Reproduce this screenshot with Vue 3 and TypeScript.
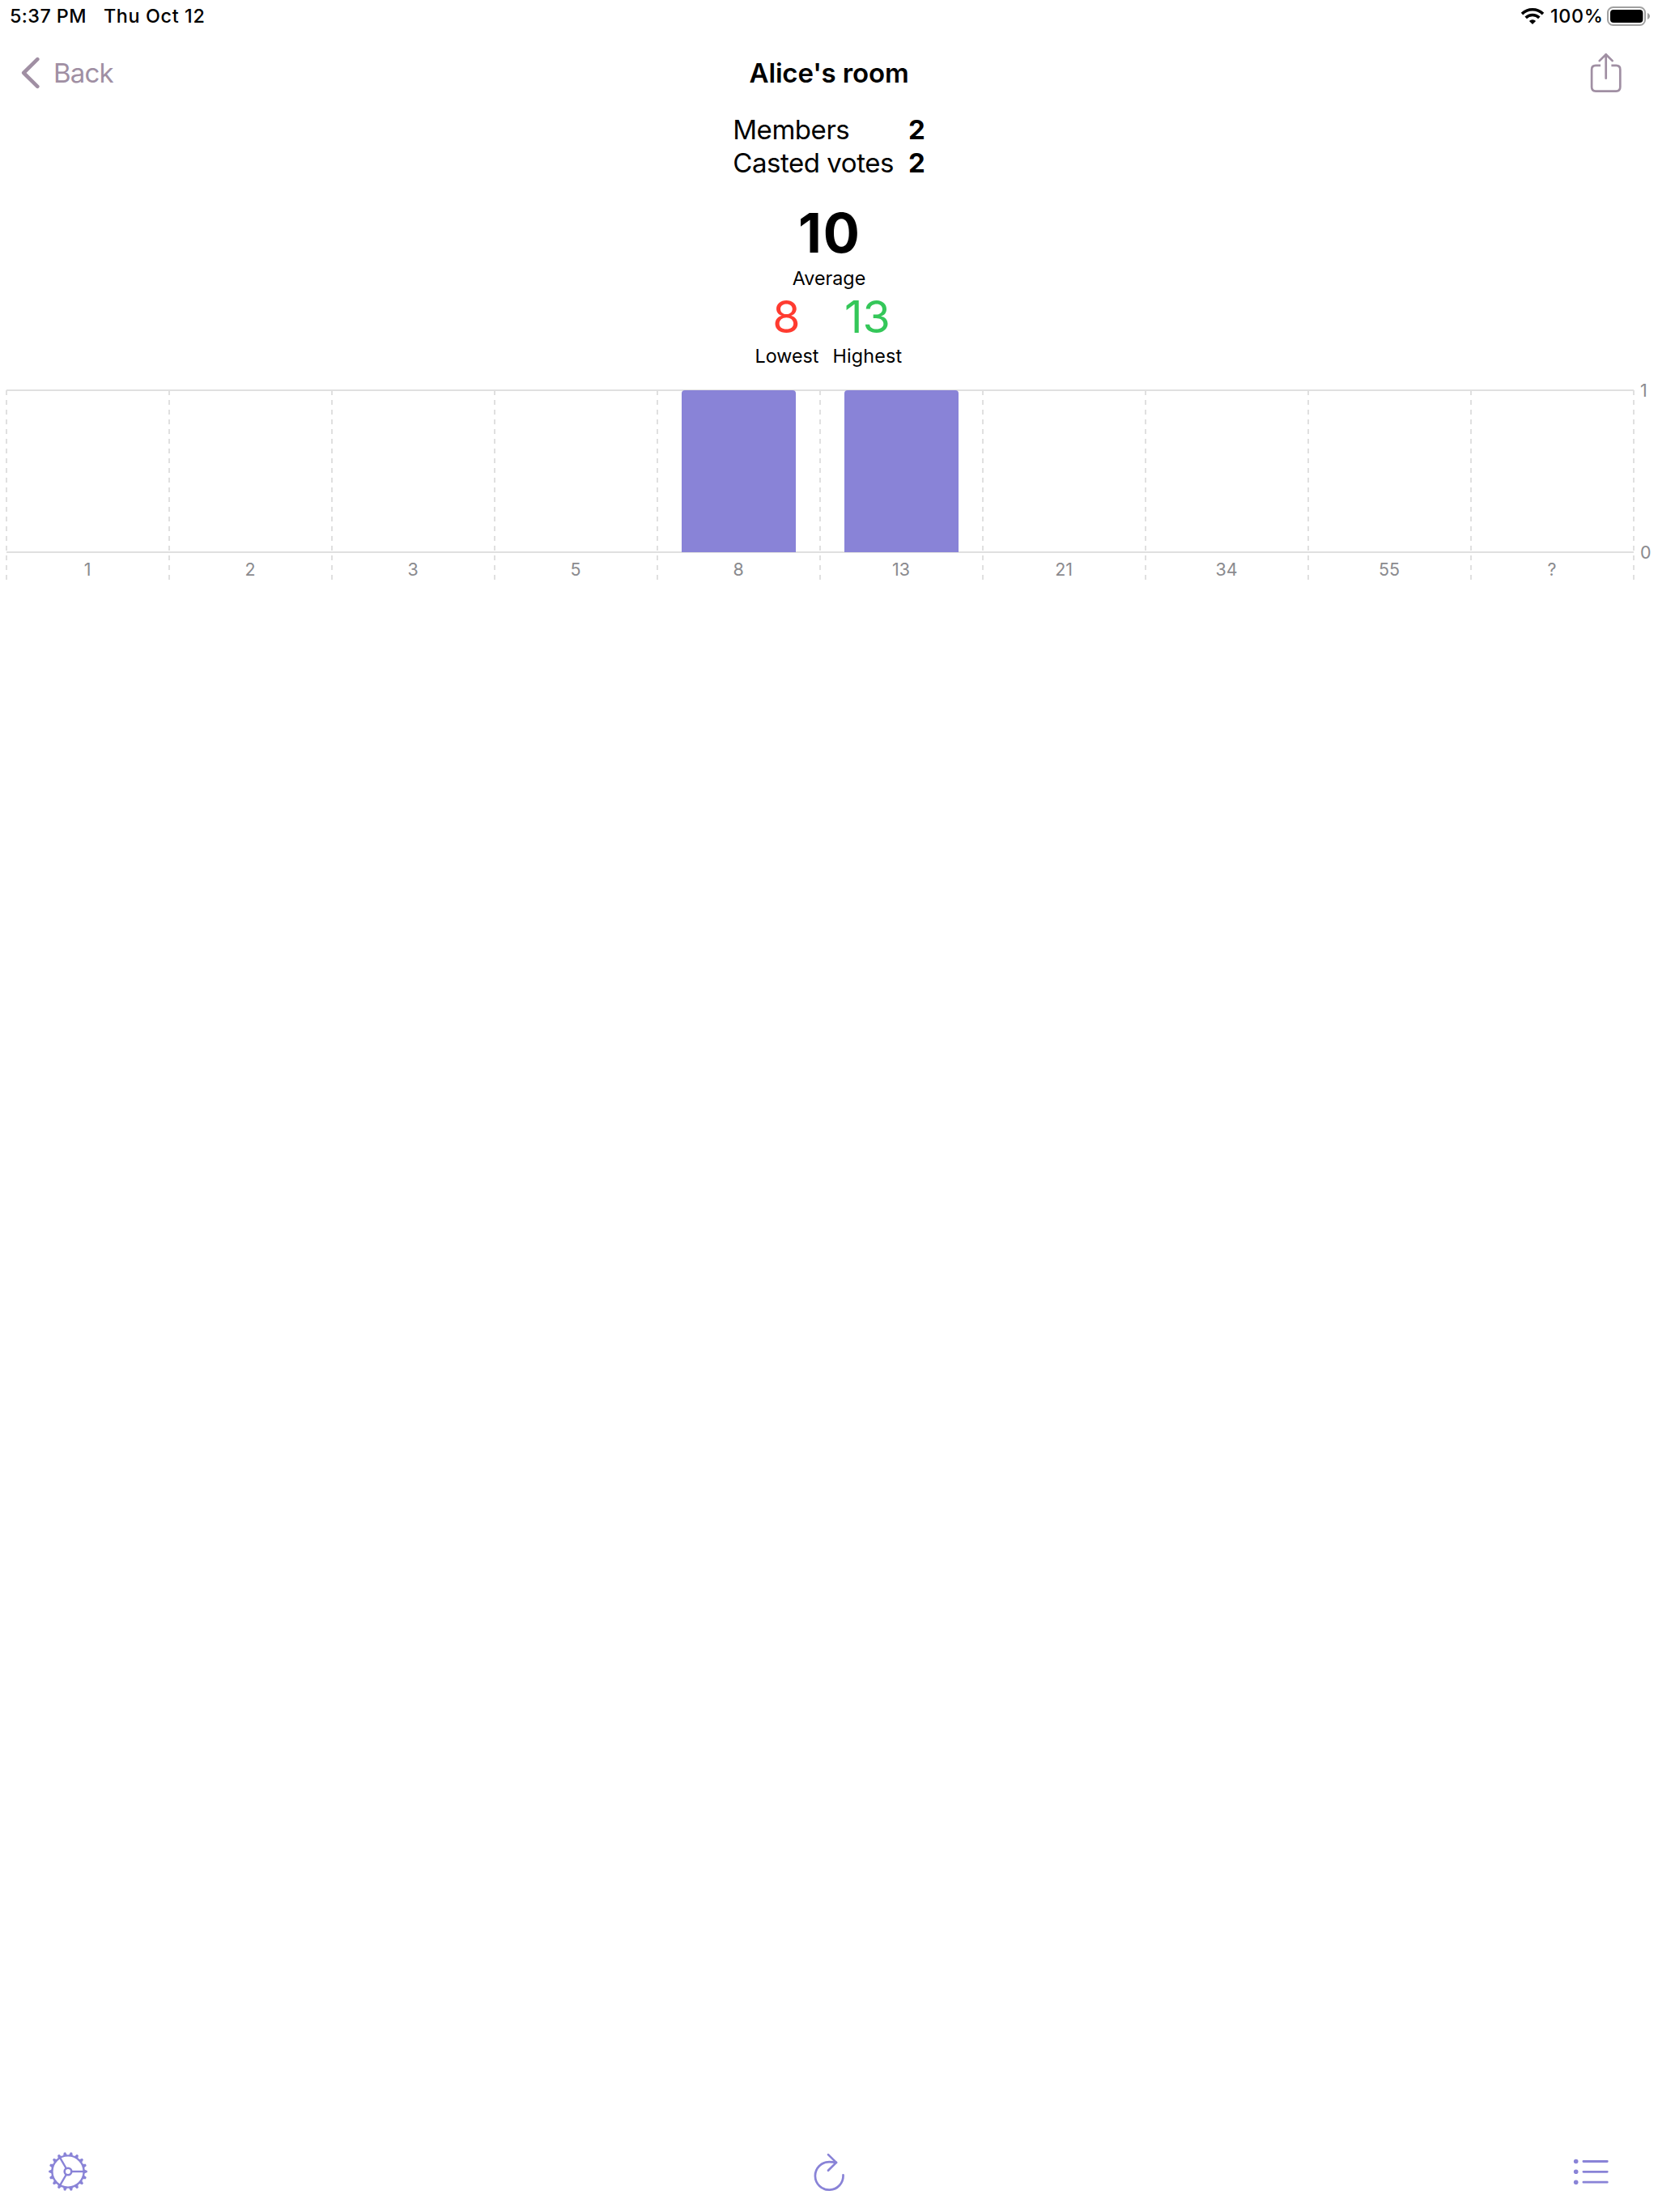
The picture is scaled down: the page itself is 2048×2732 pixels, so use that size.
<script setup lang="ts">
interface Vote {
  label: string
  count: number
}

const votes: Vote[] = [
  { label: '1', count: 0 },
  { label: '2', count: 0 },
  { label: '3', count: 0 },
  { label: '5', count: 0 },
  { label: '8', count: 1 },
  { label: '13', count: 1 },
  { label: '21', count: 0 },
  { label: '34', count: 0 },
  { label: '55', count: 0 },
  { label: '?', count: 0 },
]

const maxCount = 1
const teeth: number[] = Array.from({ length: 18 }, (_, i) => i * 20)
const spokes: number[] = [0, 120, 240]
</script>

<template>
  <div class="screen">
    <header class="status">
      <div class="status-left">
        <span class="time">5:37 PM</span>
        <span class="date">Thu Oct 12</span>
      </div>
      <div class="status-right">
        <svg class="wifi" width="30" height="22" viewBox="0 0 30 22">
          <g fill="none" stroke="#000" stroke-width="3.6">
            <path d="M2 8.1A18.6 18.6 0 0 1 28 8.1" />
            <path d="M6.7 12.9A11.9 11.9 0 0 1 23.3 12.9" />
          </g>
          <path d="M15 21L10.9 16.9A5.8 5.8 0 0 1 19.1 16.9Z" fill="#000" />
        </svg>
        <span class="percent">100%</span>
        <svg class="battery" width="54" height="24" viewBox="0 0 54 24">
          <rect x="1" y="1" width="46" height="22" rx="6.5" fill="none" stroke="#a0a0a0" stroke-width="2" />
          <rect x="4" y="4" width="40.4" height="16" rx="4" fill="#000" />
          <path d="M50 8C54 9.4 54 14.6 50 16Z" fill="#a0a0a0" />
        </svg>
      </div>
    </header>

    <nav class="nav">
      <div class="back">
        <svg width="24" height="40" viewBox="0 0 24 40">
          <path d="M21.3 3.2L4.2 20L21.3 36.8" fill="none" stroke="currentColor" stroke-width="4.6" stroke-linecap="round" stroke-linejoin="round" />
        </svg>
        <span class="back-label">Back</span>
      </div>
      <h1 class="title">Alice's room</h1>
      <svg class="share" width="40" height="50" viewBox="0 0 40 50" fill="none" stroke="currentColor" stroke-width="2.7" stroke-linecap="round" stroke-linejoin="round">
        <path d="M13 15.9H7.1Q2.1 15.9 2.1 20.9V42.6Q2.1 47.6 7.1 47.6H32.3Q37.3 47.6 37.3 42.6V20.9Q37.3 15.9 32.3 15.9H26.4" stroke-linecap="butt" />
        <path d="M19.7 31.7V2.2M11.7 10.1L19.7 2.2L27.7 10.1" />
      </svg>
    </nav>

    <section class="counts">
      <div class="count-labels">
        <span class="members">Members</span>
        <span class="casted">Casted votes</span>
      </div>
      <div class="count-values">
        <span>2</span>
        <span>2</span>
      </div>
    </section>

    <section class="summary">
      <div class="average">10</div>
      <div class="caption average-caption">Average</div>
      <div class="extremes">
        <div class="extreme">
          <div class="value low">8</div>
          <div class="caption lowest">Lowest</div>
        </div>
        <div class="extreme">
          <div class="value high">13</div>
          <div class="caption highest">Highest</div>
        </div>
      </div>
    </section>

    <section class="chart">
      <div class="columns">
        <div v-for="vote in votes" :key="vote.label" class="column">
          <div class="plot">
            <div v-if="vote.count" class="bar" :style="{ height: (vote.count / maxCount) * 100 + '%' }"></div>
          </div>
          <div class="tick">{{ vote.label }}</div>
        </div>
      </div>
      <div class="axis">
        <span>1</span>
        <span>0</span>
      </div>
    </section>

    <footer class="toolbar">
      <svg width="50" height="50" viewBox="-25 -25 50 50" fill="none" stroke="currentColor" stroke-width="2.4">
        <circle r="19.6" />
        <circle r="4.3" stroke-width="2.6" />
        <path v-for="a in spokes" :key="'s' + a" d="M4.6 0H19.6" :transform="`rotate(${a})`" />
        <path v-for="a in teeth" :key="'t' + a" d="M20 -2.5L23.8 -1.1V1.1L20 2.5Z" fill="currentColor" stroke="none" :transform="`rotate(${a})`" />
      </svg>
      <svg width="50" height="50" viewBox="0 0 50 50" fill="none" stroke="currentColor" stroke-width="2.7" stroke-linecap="round" stroke-linejoin="round">
        <path d="M41.5 29.4A17.3 17.3 0 1 1 24.2 13.1Q28.4 13.1 33 13.9" />
        <path d="M23 4.1L33 13.9L23 23.8" />
      </svg>
      <svg width="50" height="50" viewBox="0 0 50 50">
        <g fill="currentColor">
          <circle cx="6.7" cy="12.5" r="2.8" />
          <circle cx="6.7" cy="25.3" r="2.8" />
          <circle cx="6.7" cy="38.2" r="2.8" />
        </g>
        <path d="M15.9 12.5H45.3M15.9 25.3H45.3M15.9 38.2H45.3" fill="none" stroke="currentColor" stroke-width="2.8" stroke-linecap="round" />
      </svg>
    </footer>
  </div>
</template>

<style>
body {
  margin: 0;
  background: #fff;
}
</style>

<style scoped>
.screen {
  display: flex;
  flex-direction: column;
  width: 2048px;
  height: 2732px;
  overflow: hidden;
  background: #fff;
  color: #000;
  font-family: Inter, "Liberation Sans", sans-serif;
  white-space: nowrap;
}
.status {
  display: flex;
  justify-content: space-between;
  box-sizing: border-box;
  height: 40px;
  padding: 0 9px 0 12px;
  font-size: 23.3px;
  font-weight: 500;
  line-height: 40px;
}
.status-left,
.status-right {
  display: flex;
  align-items: center;
}
.time {
  width: 116px;
  letter-spacing: 0.45px;
}
.date {
  letter-spacing: 0.65px;
}
.percent {
  width: 70px;
  margin-left: 7px;
  letter-spacing: 0.7px;
}
.nav {
  display: grid;
  grid-template-columns: 1fr auto 1fr;
  align-items: center;
  height: 100px;
  padding: 0 44px 0 44px;
  font-size: 33px;
  color: #a08fa3;
}
.back {
  display: flex;
  align-items: center;
  margin-left: -19px;
}
.back-label {
  margin-left: 17px;
  letter-spacing: -0.8px;
}
.title {
  margin: 0;
  font-size: 33px;
  font-weight: 600;
  line-height: 40px;
  letter-spacing: -0.15px;
  color: #000;
}
.share {
  justify-self: end;
}
.counts {
  display: flex;
  justify-content: center;
  gap: 18px;
  height: 82px;
  font-size: 33px;
}
.count-labels,
.count-values {
  display: flex;
  flex-direction: column;
  line-height: 41px;
}
.count-labels {
  letter-spacing: -0.45px;
}
.count-values {
  font-weight: 700;
}
.summary {
  display: flex;
  flex-direction: column;
  align-items: center;
  margin-top: 26px;
}
.average {
  height: 80px;
  margin-right: -2px;
  font-size: 67px;
  font-weight: 700;
  line-height: 80px;
  letter-spacing: 2px;
}
.caption {
  font-size: 23.3px;
  line-height: 34px;
}
.average-caption {
  line-height: 31px;
}
.highest {
  letter-spacing: 0.2px;
}
.extremes {
  display: flex;
  gap: 17px;
  margin-right: 1px;
}
.extreme {
  display: flex;
  flex-direction: column;
  align-items: center;
}
.value {
  font-size: 55.5px;
  line-height: 64px;
}
.low {
  margin-right: 1px;
  color: #ff3b30;
}
.high {
  color: #34c759;
}
.chart {
  display: flex;
  margin-top: 25px;
  padding-left: 8px;
  font-size: 21.4px;
  color: #8a8a8e;
}
.columns {
  position: relative;
  display: flex;
  width: 2010px;
  height: 234px;
}
.column {
  position: relative;
  width: 201px;
}
.column::before,
.column:last-child::after {
  content: "";
  position: absolute;
  top: 0;
  left: -1px;
  width: 2px;
  height: 234px;
  background: repeating-linear-gradient(to bottom, #e0e0e0 0 6px, transparent 6px 12px);
}
.column:last-child::after {
  left: 200px;
}
.plot {
  display: flex;
  align-items: flex-end;
  justify-content: center;
  height: 200px;
  box-shadow: 0 -1px #e0e0e0, 0 1px #e0e0e0, inset 0 1px #e0e0e0, inset 0 -1px #e0e0e0;
}
.bar {
  width: 140.7px;
  border-radius: 4px 4px 0 0;
  background: #8983d7;
}
.tick {
  height: 42px;
  padding-right: 1px;
  line-height: 42px;
  text-align: center;
}
.axis {
  display: flex;
  flex-direction: column;
  justify-content: space-between;
  height: 240px;
  margin: -20px 0 0 8px;
  line-height: 40px;
}
.toolbar {
  display: flex;
  justify-content: space-between;
  margin-top: auto;
  padding: 0 58px 25px 59px;
  color: #8983d7;
}
</style>
